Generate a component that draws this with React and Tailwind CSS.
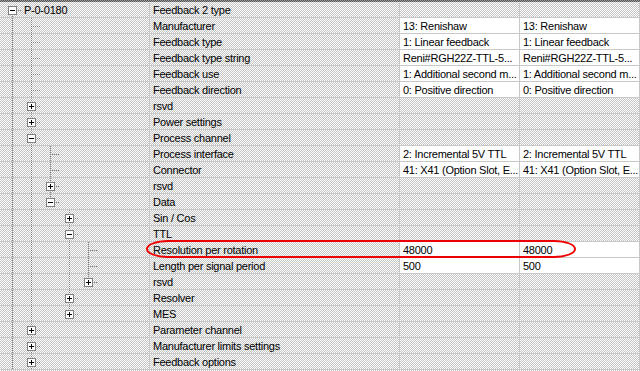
import React from "react";

const rows = [
  { d: 0, label: "P-0-0180", name: "Feedback 2 type", ex: "-" },
  { d: 1, name: "Manufacturer", v: "13: Renishaw" },
  { d: 1, name: "Feedback type", v: "1: Linear feedback" },
  { d: 1, name: "Feedback type string", v: "Reni#RGH22Z-TTL-5..." },
  { d: 1, name: "Feedback use", v: "1: Additional second m..." },
  { d: 1, name: "Feedback direction", v: "0: Positive direction" },
  { d: 1, name: "rsvd", ex: "+" },
  { d: 1, name: "Power settings", ex: "+" },
  { d: 1, name: "Process channel", ex: "-" },
  { d: 2, name: "Process interface", v: "2: Incremental 5V TTL" },
  { d: 2, name: "Connector", v: "41: X41 (Option Slot, E..." },
  { d: 2, name: "rsvd", ex: "+" },
  { d: 2, name: "Data", ex: "-" },
  { d: 3, name: "Sin / Cos", ex: "+" },
  { d: 3, name: "TTL", ex: "-" },
  { d: 4, name: "Resolution per rotation", v: "48000" },
  { d: 4, name: "Length per signal period", v: "500" },
  { d: 4, name: "rsvd", ex: "+" },
  { d: 3, name: "Resolver", ex: "+" },
  { d: 3, name: "MES", ex: "+" },
  { d: 1, name: "Parameter channel", ex: "+" },
  { d: 1, name: "Manufacturer limits settings", ex: "+" },
  { d: 1, name: "Feedback options", ex: "+", more: true },
];

function hasNext(i) {
  const d = rows[i].d;
  if (d === 0 || rows[i].more) return true;
  for (let j = i + 1; j < rows.length; j++) {
    if (rows[j].d < d) return false;
    if (rows[j].d === d) return true;
  }
  return false;
}

const next = rows.map((_, i) => hasNext(i));

function ancestorNext(i, k) {
  for (let j = i - 1; j >= 0; j--) {
    if (rows[j].d === k) return next[j];
  }
  return false;
}

const DOT = "#808080";

function Slot({ kind, down, ex, root }) {
  const dots = [];
  if (kind === "pass") {
    for (let y = 0; y <= 14; y += 2) dots.push([9, y]);
  }
  if (kind === "node") {
    if (!root) {
      for (let y = 0; y <= 8; y += 2) if (!ex || y < 4) dots.push([9, y]);
    }
    if (down) {
      for (let y = 8; y <= 14; y += 2) if (!ex || y > 12) dots.push([9, y]);
    }
    const xs = ex ? [15, 17] : [11, 13, 15, 17];
    xs.forEach((x) => dots.push([x, 8]));
  }
  return (
    <svg width="19" height="15" viewBox="0 0 19 15" className="shrink-0 block" shapeRendering="crispEdges">
      {dots.map(([x, y], k) => (
        <rect key={k} x={x} y={y} width="1" height="1" fill={DOT} />
      ))}
      {kind === "node" && ex && (
        <g>
          <rect x="5.5" y="4.5" width="8" height="8" fill="#ffffff" stroke="#808080" strokeWidth="1" />
          <rect x="7" y="8" width="5" height="1" fill="#000" />
          {ex === "+" && <rect x="9" y="6" width="1" height="5" fill="#000" />}
        </g>
      )}
    </svg>
  );
}

const pattern =
  "bg-[image:repeating-conic-gradient(#c4c4c4_0_25%,#ffffff_0_50%)] bg-[length:2px_2px]";

export default function App() {
  return (
    <div
      className={`relative w-[640px] h-[371px] overflow-hidden text-[11px] text-black tracking-[-0.25px] font-['Liberation_Sans',Arial,sans-serif] ${pattern}`}
    >
      <div className="h-[2px] bg-[image:repeating-conic-gradient(#505050_0_25%,#a0a0a0_0_50%)] bg-[length:2px_2px]" />
      {rows.map((r, i) => {
        const slots = [];
        for (let k = 0; k < r.d; k++) {
          slots.push(
            <Slot key={k} kind={ancestorNext(i, k) ? "pass" : "empty"} />
          );
        }
        slots.push(
          <Slot key="n" kind="node" down={next[i]} ex={r.ex} root={r.d === 0} />
        );
        const valCls = r.v ? "bg-white" : "";
        return (
          <div key={i} className="flex h-[16px] border-b border-[#c8c8c8]">
            <div className="w-[150px] shrink-0 border-r border-[#c8c8c8] flex items-start pl-[3px]">
              {slots}
              {r.label && (
                <span className="pl-[2px] pt-px leading-[14px] whitespace-nowrap">{r.label}</span>
              )}
            </div>
            <div className="w-[250px] shrink-0 border-r border-[#c8c8c8] pl-[3px] pt-px leading-[14px] whitespace-nowrap overflow-hidden">
              {r.name}
            </div>
            <div className={`w-[120px] shrink-0 border-r border-[#c8c8c8] pl-[3px] pt-px leading-[14px] whitespace-nowrap overflow-hidden ${valCls}`}>
              {r.v}
            </div>
            <div className={`w-[120px] shrink-0 border-r border-[#c8c8c8] pl-[3px] pt-px leading-[14px] whitespace-nowrap overflow-hidden ${valCls}`}>
              {r.v}
            </div>
          </div>
        );
      })}
      <div className="absolute left-[146px] top-[240px] w-[430px] h-[18px] border-2 border-[#ee0000] rounded-[22px/9px] pointer-events-none" />
    </div>
  );
}
